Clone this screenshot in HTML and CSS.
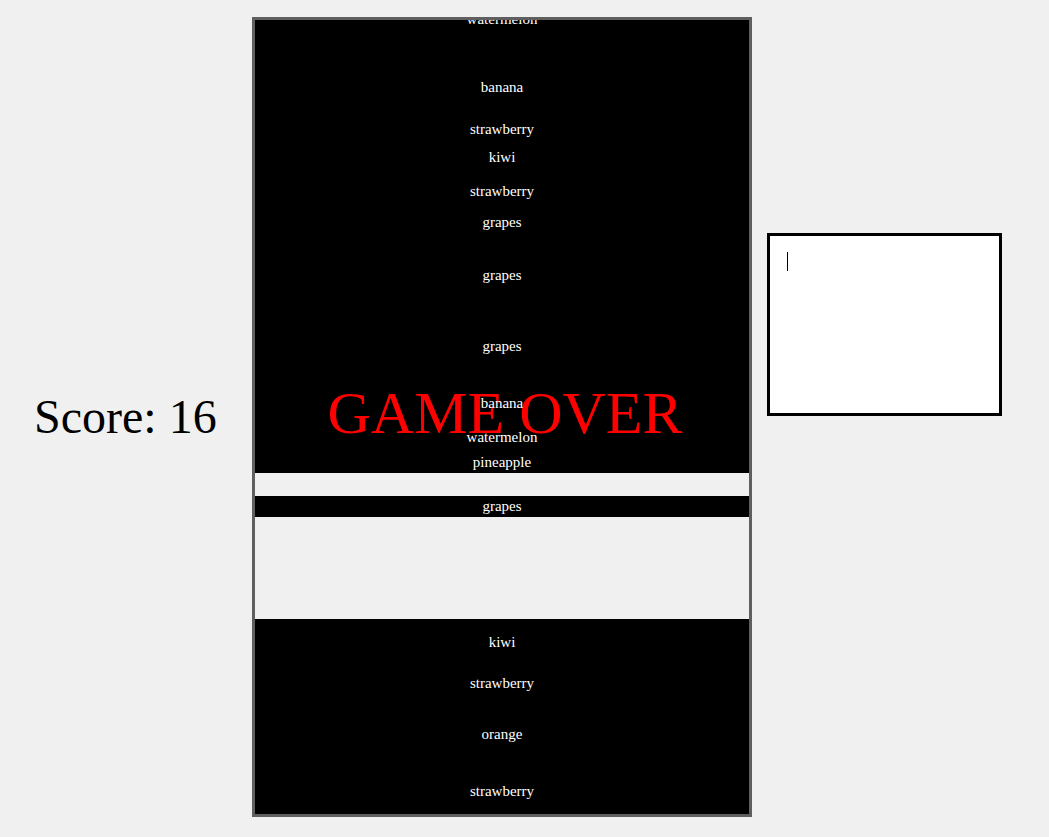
FILE: index.html
```html
<!DOCTYPE html>
<html>
<head>
<meta charset="utf-8">
<link rel="stylesheet" href="styles.css">
</head>
<body>
<div class="page">
  <div class="score">Score: 16</div>
  <div class="game">
    <div class="stripes">
      <div class="stripe black s1"></div>
      <div class="stripe s2"></div>
      <div class="stripe black s3"></div>
      <div class="stripe s4"></div>
      <div class="stripe black s5"></div>
    </div>
    <div class="gameover">GAME OVER</div>
    <div class="fruit" style="top:-9px">watermelon</div>
    <div class="fruit" style="top:59px">banana</div>
    <div class="fruit" style="top:101px">strawberry</div>
    <div class="fruit" style="top:129px">kiwi</div>
    <div class="fruit" style="top:163px">strawberry</div>
    <div class="fruit" style="top:194px">grapes</div>
    <div class="fruit" style="top:247px">grapes</div>
    <div class="fruit" style="top:318px">grapes</div>
    <div class="fruit" style="top:375px">banana</div>
    <div class="fruit" style="top:409px">watermelon</div>
    <div class="fruit" style="top:434px">pineapple</div>
    <div class="fruit" style="top:478px">grapes</div>
    <div class="fruit" style="top:614px">kiwi</div>
    <div class="fruit" style="top:655px">strawberry</div>
    <div class="fruit" style="top:706px">orange</div>
    <div class="fruit" style="top:763px">strawberry</div>
  </div>
  <div class="entry-wrap">
    <textarea class="entry"></textarea>
    <span class="caret"></span>
  </div>
</div>
</body>
</html>
```

FILE: styles.css
```css
html, body {
  margin: 0;
  padding: 0;
  background: #f0f0f0;
}

.page {
  display: flex;
  align-items: flex-start;
  padding-top: 17px;
  font-family: "Liberation Serif", "Times New Roman", serif;
}

.score {
  flex: 0 0 218px;
  margin-left: 34px;
  align-self: center;
  font-size: 48px;
  line-height: 54px;
  color: #000;
  white-space: nowrap;
}

.game {
  position: relative;
  flex: 0 0 500px;
  height: 800px;
  box-sizing: border-box;
  border: 3px solid #5f5f5f;
  overflow: hidden;
}

.stripes {
  display: flex;
  flex-direction: column;
  height: 100%;
}

.stripe.black { background: #000; }
.s1 { height: 453px; }
.s2 { height: 23px; }
.s3 { height: 21px; }
.s4 { height: 102px; }
.s5 { flex: 1; }

.gameover {
  position: absolute;
  left: 6px;
  right: 0;
  top: 359px;
  text-align: center;
  color: #ff0000;
  font-size: 60px;
  line-height: 69px;
  white-space: nowrap;
}

.fruit {
  position: absolute;
  left: 0;
  right: 0;
  text-align: center;
  color: #fff;
  font-size: 15px;
  line-height: 17px;
}

.entry-wrap {
  position: relative;
  flex: 0 0 235px;
  height: 183px;
  margin-left: 15px;
  margin-top: 216px;
}

.entry {
  display: block;
  width: 235px;
  height: 183px;
  margin: 0;
  box-sizing: border-box;
  border: 3px solid #000;
  padding: 16px;
  background: #fff;
  font-family: "Liberation Serif", "Times New Roman", serif;
  font-size: 16px;
  resize: none;
  outline: none;
}

.caret {
  position: absolute;
  left: 20px;
  top: 19px;
  width: 1px;
  height: 19px;
  background: #000;
}
```
